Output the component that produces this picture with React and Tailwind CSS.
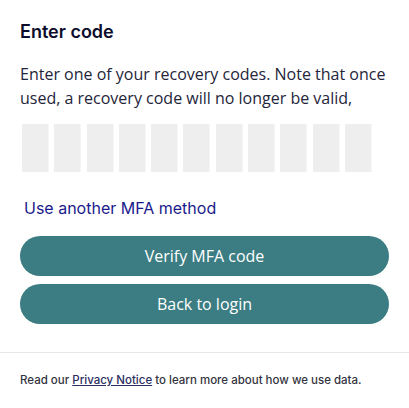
export default function App() {
  const slots = Array.from({ length: 11 });

  return (
    <div className="w-[409px] h-[408px] bg-white overflow-hidden">
      <div className="px-5 pt-[21px]">
        {/* HEADING */}
        <h1 className="text-[18px] leading-[22px] font-semibold text-[#0c0d2c] font-['Inter',sans-serif]">
          Enter code
        </h1>

        <p className="mt-[19px] text-[16px] leading-[24px] text-[#24253a] font-['Open_Sans',sans-serif]">
          Enter one of your recovery codes. Note that once used, a recovery code will no longer be valid,
        </p>

        {/* CODE SLOTS */}
        <div className="mt-[14px] ml-[2px] flex gap-[5.3px]">
          {slots.map((_, i) => (
            <div
              key={i}
              className="w-[27px] h-[48px] bg-[#eeeeee] border-r border-[#f6f6f6]"
            />
          ))}
        </div>

        <a className="mt-[26px] ml-1 block text-[16px] leading-[20px] text-[#1b1b8c] font-['Inter',sans-serif]">
          Use another MFA method
        </a>

        {/* ACTIONS */}
        <div className="mt-[18px] flex flex-col gap-2">
          <button className="h-10 w-full rounded-full bg-[#3b7d82] text-white text-[16px] font-['Open_Sans',sans-serif]">
            Verify MFA code
          </button>
          <button className="h-10 w-full rounded-full bg-[#3b7d82] text-white text-[16px] font-['Open_Sans',sans-serif]">
            Back to login
          </button>
        </div>
      </div>

      <div className="mt-7 border-t border-[#e6e6e6]" />

      <p className="px-5 pt-[20px] text-[11.5px] leading-[14px] font-medium text-[#333340] font-['Inter',sans-serif]">
        Read our{" "}
        <a className="underline text-[#2a2d5e]">Privacy Notice</a>{" "}
        to learn more about how we use data.
      </p>
    </div>
  );
}
